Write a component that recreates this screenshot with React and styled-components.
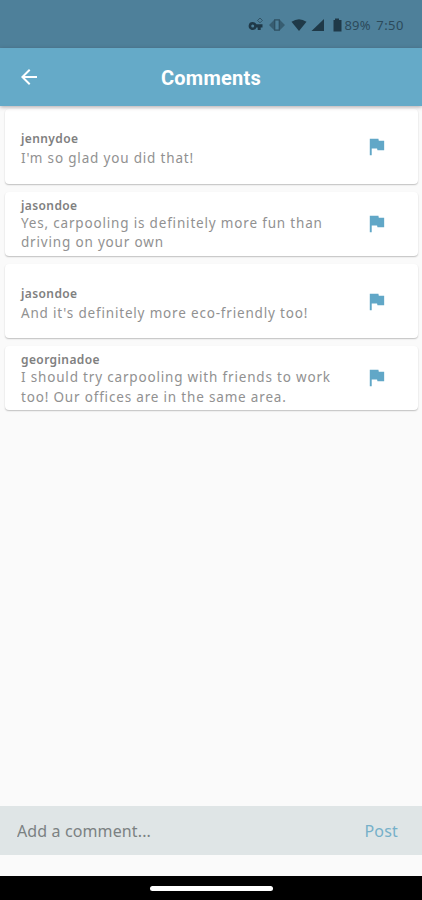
import React from "react";
import styled, { createGlobalStyle } from "styled-components";
import { MdArrowBack, MdFlag } from "react-icons/md";

const GlobalStyle = createGlobalStyle`
  * {
    box-sizing: border-box;
  }
  body {
    margin: 0;
    background-color: #fafafa;
    font-family: "Noto Sans", sans-serif;
  }
`;
const Screen = styled.div`
  display: flex;
  flex-direction: column;
  width: 422px;
  height: 900px;
  overflow: hidden;
  background-color: #fafafa;
`;
const StatusBar = styled.div`
  display: flex;
  flex-shrink: 0;
  align-items: center;
  justify-content: flex-end;
  height: 48px;
  padding: 2px 18px 0 0;
  color: #1f3948;
  background-color: #4e809a;
`;
const StatusIcons = styled.svg`
  width: 96px;
  height: 20px;
`;
const StatusText = styled.span`
  color: #2c4a5a;
  font-size: 13px;
  line-height: 20px;
  letter-spacing: ${(props) => props.$spacing || "0.2px"};
  margin-left: ${(props) => props.$gap || "0"};
`;
const Header = styled.header`
  display: grid;
  grid-template-columns: 58px 1fr 58px;
  flex-shrink: 0;
  align-items: center;
  height: 58px;
  background-color: #65aac8;
  box-shadow: 0 1px 4px rgba(60, 40, 50, 0.4);
  z-index: 1;
`;
const BackButton = styled.button`
  display: flex;
  justify-content: center;
  padding: 0;
  border: none;
  color: #fff;
  background: none;
  font-size: 24px;
`;
const Title = styled.h1`
  margin: 2px 0 0;
  color: #fff;
  font-family: Roboto, sans-serif;
  font-size: 20px;
  font-weight: 700;
  letter-spacing: 0.25px;
  text-align: center;
`;
const List = styled.ul`
  display: flex;
  flex: 1;
  flex-direction: column;
  gap: 8px;
  margin: 0;
  padding: 3px 4px 0 5px;
  list-style: none;
`;
const Card = styled.li`
  display: flex;
  align-items: center;
  justify-content: space-between;
  height: ${(props) => (props.$tall ? "74.5px" : "64px")};
  padding: ${(props) => (props.$tall ? "6px" : "2px")} 30px 0 16px;
  border-radius: 4px;
  background-color: #fff;
  box-shadow: 0 1px 1.5px rgba(0, 0, 0, 0.24);
`;
const Author = styled.p`
  margin: 0 0 ${(props) => (props.$tall ? "2px" : "0")};
  color: #808080;
  font-size: 12px;
  font-weight: 600;
  line-height: 17px;
  letter-spacing: 0.4px;
`;
const Message = styled.p`
  width: 325px;
  margin: 0;
  color: #919191;
  font-size: 13.5px;
  line-height: 19.5px;
  letter-spacing: 0.82px;
  white-space: pre-line;
`;
const FlagButton = styled.button`
  display: flex;
  padding: 0;
  margin-bottom: ${(props) => (props.$tall ? "5px" : "3px")};
  border: none;
  color: #61a7c7;
  background: none;
  font-size: 23px;
`;
const CommentBar = styled.form`
  display: flex;
  flex-shrink: 0;
  align-items: center;
  justify-content: space-between;
  height: 49px;
  margin-bottom: 21px;
  padding: 0 24px 0 17px;
  background-color: #dfe5e6;
`;
const CommentInput = styled.input`
  width: 280px;
  padding: 0;
  border: none;
  outline: none;
  background: none;
  font-family: inherit;
  font-size: 16px;
  letter-spacing: 0.12px;
  &::placeholder {
    color: #7b8182;
    opacity: 1;
  }
`;
const PostButton = styled.button`
  padding: 0;
  border: none;
  color: #76b0c9;
  background: none;
  font-family: inherit;
  font-size: 16px;
  letter-spacing: 0.2px;
`;
const NavigationBar = styled.div`
  display: flex;
  flex-shrink: 0;
  justify-content: center;
  height: 24px;
  padding-top: 10px;
  background-color: #000;
`;
const HomeHandle = styled.div`
  width: 123px;
  height: 5px;
  border-radius: 3px;
  background-color: #fff;
`;

const comments = [
  { id: 1, author: "jennydoe", text: "I'm so glad you did that!", tall: true },
  {
    id: 2,
    author: "jasondoe",
    text: "Yes, carpooling is definitely more fun than\ndriving on your own",
  },
  {
    id: 3,
    author: "jasondoe",
    text: "And it's definitely more eco-friendly too!",
    tall: true,
  },
  {
    id: 4,
    author: "georginadoe",
    text: "I should try carpooling with friends to work\ntoo! Our offices are in the same area.",
  },
];

function DeviceIcons() {
  return (
    <StatusIcons viewBox="0 0 96 20" fill="currentColor">
      {/* vpn key */}
      <path
        fillRule="evenodd"
        d="M4.7 7a4 4 0 1 0 3.7 5.4h1.3V15h3v-2.6h1.8V9.3H8.4A4 4 0 0 0 4.7 7zm0 2.5a1.5 1.5 0 1 1 0 3 1.5 1.5 0 0 1 0-3z"
      />
      <path
        d="M12 3l2.4 2.4L12 7.8 9.6 5.4z"
        fill="none"
        stroke="currentColor"
        opacity=".6"
      />
      {/* vibrate */}
      <path d="M26 5v10l-5-5zM32 5v10l5-5z" opacity=".5" />
      <path
        d="M26.7 4.9h4.6v10.2h-4.6z"
        fill="none"
        stroke="currentColor"
        strokeWidth="1.3"
        opacity=".7"
      />
      {/* wifi and signal */}
      <path d="M43.5 6.8Q51 1.5 58.5 6.8L51 16z" />
      <path d="M76 4v12H63.5z" />
      {/* battery */}
      <path d="M87 3.5h4V5h2.5v11.5h-8V5H87z" />
    </StatusIcons>
  );
}

export default function App() {
  return (
    <>
      <GlobalStyle />
      <Screen>
        <StatusBar>
          <DeviceIcons />
          <StatusText>89%</StatusText>
          <StatusText $gap="5.5px" $spacing="0.5px">
            7:50
          </StatusText>
        </StatusBar>
        <Header>
          <BackButton type="button" aria-label="Back">
            <MdArrowBack />
          </BackButton>
          <Title>Comments</Title>
        </Header>
        <List>
          {comments.map((comment) => (
            <Card key={comment.id} $tall={comment.tall}>
              <div>
                <Author $tall={comment.tall}>{comment.author}</Author>
                <Message>{comment.text}</Message>
              </div>
              <FlagButton
                type="button"
                aria-label="Report comment"
                $tall={comment.tall}
              >
                <MdFlag />
              </FlagButton>
            </Card>
          ))}
        </List>
        <CommentBar>
          <CommentInput placeholder="Add a comment..." />
          <PostButton type="button">Post</PostButton>
        </CommentBar>
        <NavigationBar>
          <HomeHandle />
        </NavigationBar>
      </Screen>
    </>
  );
}
